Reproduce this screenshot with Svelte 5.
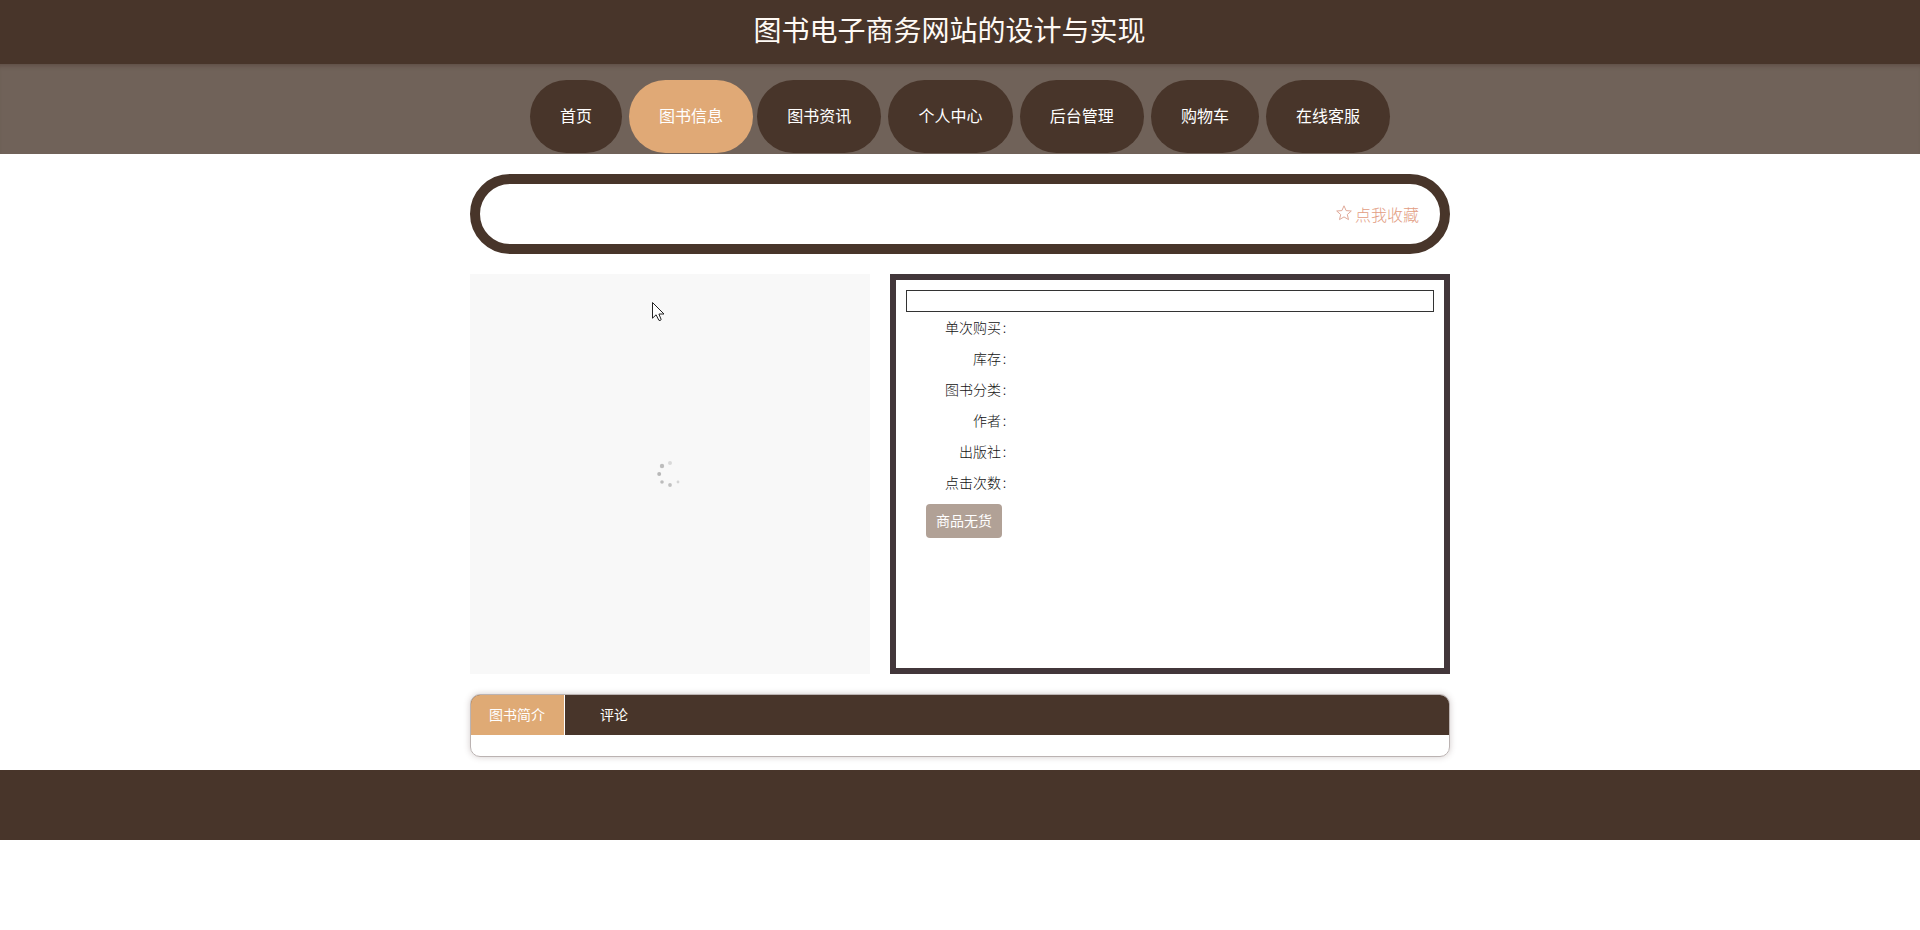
<script lang="ts">
  interface NavItem { label: string; active?: boolean; }

  const title = '图书电子商务网站的设计与实现';
  const nav: NavItem[] = [
    { label: '首页' },
    { label: '图书信息', active: true },
    { label: '图书资讯' },
    { label: '个人中心' },
    { label: '后台管理' },
    { label: '购物车' },
    { label: '在线客服' },
  ];
  const fields = ['单次购买', '库存', '图书分类', '作者', '出版社', '点击次数'];
  const tabs = ['图书简介', '评论'];
  let current = $state(0);

  // Frozen frame of the carousel loader; the dots fade round the ring.
  const dots = [
    { x: 13, y: 3, r: 2, o: 0.12 },
    { x: 5, y: 6, r: 2.2, o: 0.24 },
    { x: 2.2, y: 14, r: 2, o: 0.26 },
    { x: 5, y: 22, r: 1.8, o: 0.24 },
    { x: 13, y: 25, r: 1.9, o: 0.22 },
    { x: 21, y: 22, r: 1.4, o: 0.14 },
  ];
</script>

<header>
  <h1>{title}</h1>
</header>

<nav>
  {#each nav as item}
    <a class="pill" class:active={item.active} href="#top">{item.label}</a>
  {/each}
</nav>

<main>
  <section class="bar">
    <button class="fav">
      <svg width="16" height="16" viewBox="0 0 16 16">
        <path d="M8 .8 10.1 5.6 15.3 6 11.3 9.5 12.5 14.6 8 11.9 3.5 14.6 4.7 9.5 .7 6 5.9 5.6Z" />
      </svg>
      <span>点我收藏</span>
    </button>
  </section>

  <section class="info">
    <div class="cover">
      <svg class="spinner" width="24" height="28" viewBox="0 0 24 28">
        {#each dots as d}
          <circle cx={d.x} cy={d.y} r={d.r} fill-opacity={d.o} />
        {/each}
      </svg>
      <svg class="cursor" width="13" height="20" viewBox="0 0 13 20">
        <path d="M.5 .5V16.2L4.1 12.8 6.8 18.2Q8 19.2 9.2 17.6L6.9 12H12Z" />
      </svg>
    </div>
    <div class="detail">
      <div class="name"></div>
      {#each fields as f}
        <div class="row"><span class="label">{f}<i>:</i></span></div>
      {/each}
      <button class="buy" disabled>商品无货</button>
    </div>
  </section>

  <section class="tabs">
    <div class="tab-head">
      {#each tabs as t, i}
        <button class="tab" class:active={i === current} onclick={() => (current = i)}>{t}</button>
      {/each}
    </div>
    <div class="tab-body"></div>
  </section>
</main>

<footer></footer>

<style>
  :global(body) {
    background: #fff;
    font-family: 'Noto Sans CJK SC', 'Liberation Sans', sans-serif;
  }
  button { border: 0; background: none; font-family: inherit; }

  header {
    display: flex; justify-content: center; box-sizing: border-box;
    height: 64px; padding-right: 21px; background: #48352a;
  }
  h1 { margin: 0; font-size: 28px; line-height: 58px; font-weight: 400; color: #fffaf5; }

  nav {
    display: flex; justify-content: center; gap: 7.2px; box-sizing: border-box;
    height: 90px; padding-top: 16px; background: #706259;
    box-shadow: inset 0 5px 4px -3px rgba(72, 53, 42, 0.4);
  }
  .pill {
    height: 73px; padding: 0 30px; border-radius: 40px; background: #48352a;
    color: #fff; font-size: 16px; line-height: 71px; text-decoration: none;
  }
  .pill.active { margin-right: -3px; background: #e0a976; }

  main { width: 980px; margin: 20px auto 0; }
  .bar {
    display: flex; justify-content: flex-end; align-items: center; box-sizing: border-box;
    height: 80px; padding-right: 21px; border: 10px solid #48352a; border-radius: 40px;
  }
  .fav {
    display: flex; align-items: center; gap: 3px; padding: 0;
    color: #e29c82; font-size: 16px; font-weight: 300;
  }
  .fav svg { margin-bottom: 2px; fill: none; stroke: #dfa999; stroke-width: 1; }

  .info { display: flex; gap: 20px; margin-top: 20px; }
  .cover {
    position: relative; display: flex; align-items: center; justify-content: center;
    width: 400px; height: 400px; background: #f8f8f8;
  }
  .spinner { margin-right: 2px; fill: #000; }
  .cursor { position: absolute; left: 182px; top: 28px; fill: #fff; stroke: #222; }
  .detail {
    flex: 1; box-sizing: border-box; height: 400px; padding: 10px;
    border: 6px solid #42363a;
  }
  .name { height: 20px; border: 1px solid #333; }
  .row { display: flex; height: 31px; }
  .label {
    width: 102px; text-align: right; color: #111;
    font-size: 14px; line-height: 30px; font-weight: 300;
  }
  .label i { display: inline-block; width: 7px; text-align: center; font-style: normal; }
  .buy {
    display: block; height: 34px; margin: 6px 0 0 20px; padding: 0 10px 2px;
    border-radius: 4px; background: #b1a196; color: #fff; font-size: 14px;
  }

  .tabs {
    box-sizing: border-box; height: 63px; margin-top: 20px; overflow: hidden;
    border: 1px solid #bbb3b2; border-radius: 10px; box-shadow: 0 0 6px rgba(80, 50, 50, 0.25);
  }
  .tab-head { display: flex; height: 40px; background: #48352a; }
  .tab {
    width: 94px; padding: 0 0 2px 35px; color: #fff; font-size: 14px; text-align: left;
  }
  .tab.active { padding-left: 18px; border-right: 1px solid #fff; background: #dfaa75; }

  footer { height: 70px; margin-top: 13px; background: #48352a; }
</style>
